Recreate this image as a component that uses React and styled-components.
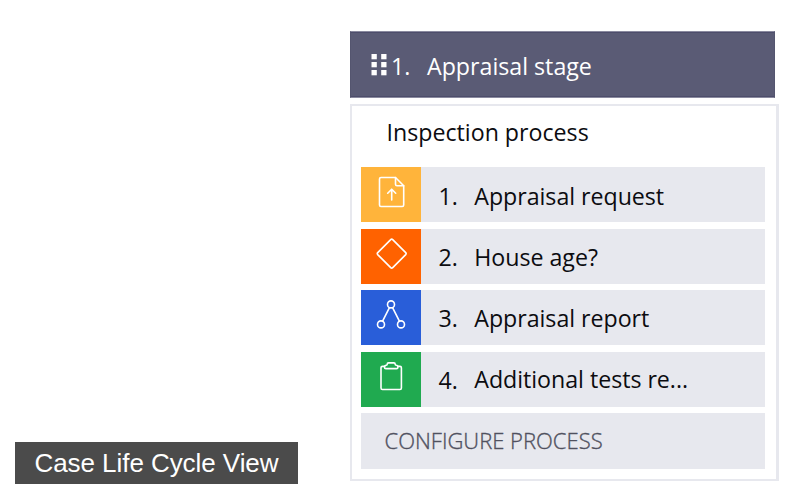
import React from "react";
import styled, { createGlobalStyle } from "styled-components";

const GlobalStyle = createGlobalStyle`
  * { box-sizing: border-box; }
  body {
    margin: 0;
    background: #fff;
    overflow: hidden;
    font-family: "Open Sans", "Noto Sans", sans-serif;
  }
`;

const Page = styled.main`
  display: grid;
  grid-template-columns: 350px 429px;
  width: 790px;
  height: 495px;
`;

const CaptionColumn = styled.div`
  display: flex;
  align-items: flex-end;
  padding: 0 0 11px 15px;
`;

const Caption = styled.div`
  width: 283px;
  height: 42px;
  padding-left: 19.5px;
  background: #4b4b4b;
  color: #fff;
  font: 26px/42px "Liberation Sans", Arial, sans-serif;
  letter-spacing: -0.06px;
  white-space: nowrap;
`;

const Stage = styled.section`
  padding-top: 31px;
`;

const StageHeader = styled.header`
  display: flex;
  width: 425px;
  height: 67px;
  padding-left: 19.5px;
  border: 1px solid #54556f;
  border-top-color: #8a8a9f;
  border-bottom-color: #8a8a9f;
  background: #5a5b75;
  box-shadow: inset 0 1px #4d4d6b, inset 0 -1px #4d4d6b;
  color: #fff;
  font-size: 23.2px;
  line-height: 68px;
  white-space: nowrap;
`;

const Grip = styled.svg`
  flex: none;
  width: 16px;
  height: 22px;
  margin-top: 22px;
  fill: #fff;
`;

const StageNumber = styled.span`
  flex: none;
  width: 36px;
  margin-left: 4.5px;
`;

const StageName = styled.span``;

const Process = styled.div`
  width: 429px;
  height: 377px;
  margin-top: 6px;
  padding: 0 10px 0 9px;
  border: 2px solid #e7e8ee;
  border-right-width: 3px;
`;

const ProcessName = styled.h2`
  height: 61.4px;
  margin: 0;
  padding-left: 25.5px;
  color: #0c0c10;
  font-size: 23.2px;
  font-weight: 400;
  line-height: 53px;
`;

const Steps = styled.ol`
  display: flex;
  flex-direction: column;
  gap: 6.4px;
  margin: 0;
  padding: 0;
  list-style: none;
`;

const Step = styled.li`
  display: flex;
  width: 404px;
  height: 55px;
  background: #e7e8ee;
  color: #0c0c10;
  font-size: 23.2px;
  line-height: ${(p) => p.$lineHeight}px;
  white-space: nowrap;
`;

const StepIcon = styled.span`
  flex: none;
  width: 60px;
  height: 55px;
  background: ${(p) => p.$color};

  svg {
    display: block;
    width: 60px;
    height: 55px;
    fill: none;
    stroke: #fff;
    stroke-width: 1.6;
    stroke-linejoin: round;
    stroke-linecap: round;
  }
`;

const StepNumber = styled.span`
  flex: none;
  width: 53.3px;
  padding-left: 17.5px;
`;

const StepName = styled.span`
  line-height: ${(p) => p.$lineHeight}px;
  letter-spacing: -0.03px;
`;

const Configure = styled.button`
  display: block;
  width: 404px;
  height: 56px;
  margin: 6.4px 0 0;
  padding: 0 0 2px 23.5px;
  border: 0;
  background: #e7e8ee;
  color: #50515f;
  font-family: inherit;
  font-size: 22px;
  font-weight: 300;
  -webkit-text-stroke: 0.35px #50515f;
  line-height: 54px;
  text-align: left;
`;

const UploadIcon = () => (
  <svg viewBox="0 0 60 55">
    <path d="M20 10.5H34.5L42.7 18.7V38Q42.7 39.5 41.2 39.5H20Q18.5 39.5 18.5 38V12Q18.5 10.5 20 10.5Z" />
    <path d="M34.5 10.5V17.2Q34.5 18.7 36 18.7H42.7M30.7 33V22.5M26.7 26.2L30.7 22.2L34.7 26.2" />
  </svg>
);

const DecisionIcon = () => (
  <svg viewBox="0 0 60 55">
    <path d="M29.7 10.6Q30.7 9.6 31.7 10.6L44.7 23.6Q45.6 24.6 44.7 25.6L31.7 38.6Q30.7 39.6 29.7 38.6L16.7 25.6Q15.8 24.6 16.7 23.6Z" />
  </svg>
);

const BranchIcon = () => (
  <svg viewBox="0 0 60 55">
    <circle cx="30" cy="14.4" r="3.5" />
    <circle cx="20" cy="34.4" r="3.5" />
    <circle cx="40" cy="34.4" r="3.5" />
    <path d="M28.3 17.8L21.6 31.1M31.7 17.8L38.4 31.1" />
  </svg>
);

const ClipboardIcon = () => (
  <svg viewBox="0 0 60 55">
    <path d="M23.5 14.4H21.4Q20 14.4 20 15.8V36.1Q20 37.5 21.4 37.5H39Q40.4 37.5 40.4 36.1V15.8Q40.4 14.4 39 14.4H36.9" />
    <path d="M23.5 15.2Q23.5 13.2 25.3 13.2Q26.2 13.2 26.2 12.2Q26.2 10.9 27.5 10.9H32.9Q34.2 10.9 34.2 12.2Q34.2 13.2 35.1 13.2Q36.9 13.2 36.9 15.2Q36.9 16.6 35.6 16.6H24.8Q23.5 16.6 23.5 15.2Z" />
  </svg>
);

const steps = [
  { name: "Appraisal request", color: "#ffb43b", Icon: UploadIcon, lineHeight: 58 },
  { name: "House age?", color: "#ff6200", Icon: DecisionIcon, lineHeight: 56 },
  { name: "Appraisal report", color: "#295ed9", Icon: BranchIcon, lineHeight: 56 },
  { name: "Additional tests re...", color: "#20aa50", Icon: ClipboardIcon, lineHeight: 56, nameLineHeight: 54 },
];

export default function App() {
  return (
    <>
      <GlobalStyle />
      <Page>
        <CaptionColumn>
          <Caption>Case Life Cycle View</Caption>
        </CaptionColumn>
        <Stage>
          <StageHeader>
            <Grip viewBox="0 0 16 22">
              {[0, 8, 16].map((y) => (
                <React.Fragment key={y}>
                  <rect x="0.5" y={y} width="5.3" height="5.3" />
                  <rect x="10.2" y={y} width="5.3" height="5.3" />
                </React.Fragment>
              ))}
            </Grip>
            <StageNumber>1.</StageNumber>
            <StageName>Appraisal stage</StageName>
          </StageHeader>
          <Process>
            <ProcessName>Inspection process</ProcessName>
            <Steps>
              {steps.map(({ name, color, Icon, lineHeight, nameLineHeight }, i) => (
                <Step key={name} $lineHeight={lineHeight}>
                  <StepIcon $color={color}>
                    <Icon />
                  </StepIcon>
                  <StepNumber>{i + 1}.</StepNumber>
                  <StepName $lineHeight={nameLineHeight || lineHeight}>{name}</StepName>
                </Step>
              ))}
            </Steps>
            <Configure>CONFIGURE PROCESS</Configure>
          </Process>
        </Stage>
      </Page>
    </>
  );
}
